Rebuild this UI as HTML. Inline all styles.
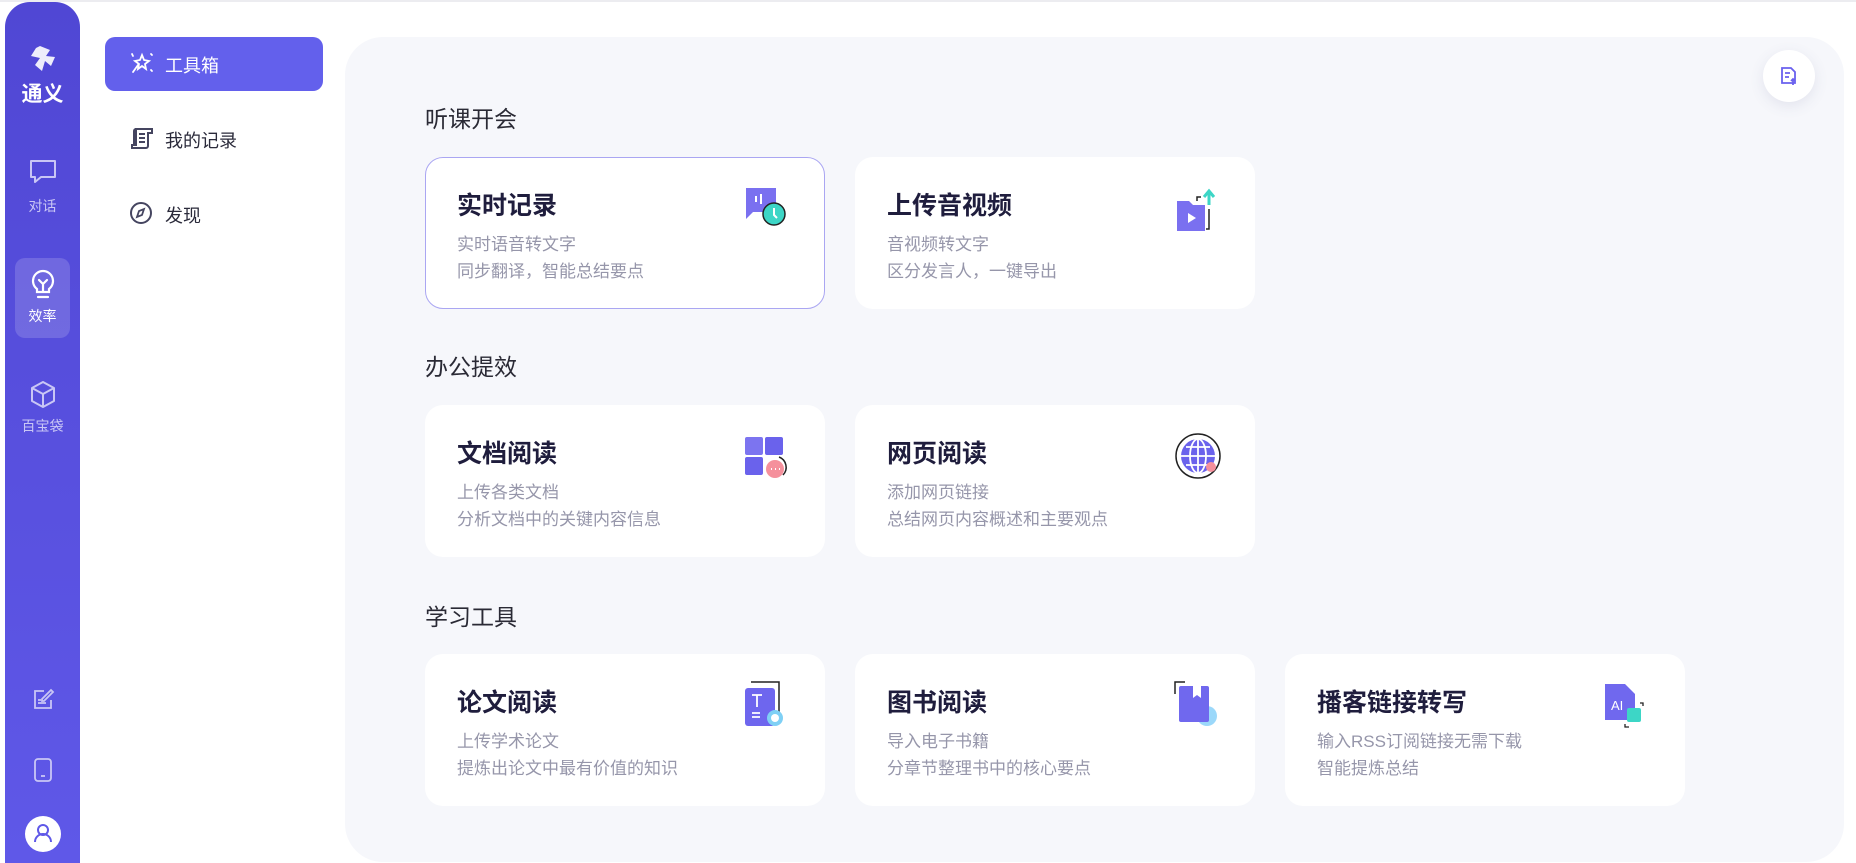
<!DOCTYPE html>
<html><head><meta charset="utf-8">
<style>
*{margin:0;padding:0;box-sizing:border-box}
body{width:1856px;height:863px;background:#fff;font-family:"Liberation Sans","Noto Sans CJK SC",sans-serif;position:relative;overflow:hidden}
.topline{position:absolute;left:0;top:0;width:1856px;height:2px;background:#ececf0}
.side{position:absolute;left:5px;top:2px;width:75px;height:861px;border-radius:25px 25px 0 0;background:linear-gradient(#5047d4,#5f58e8)}
.si{position:absolute;left:0;width:75px;text-align:center;color:#c9c6f5;font-size:14px}
.si svg{display:block;margin:0 auto}
.active{position:absolute;left:10px;top:256px;width:55px;height:80px;border-radius:10px;background:rgba(255,255,255,.16)}
.nav{position:absolute;left:105px;top:37px;width:218px;height:54px;border-radius:10px;background:#6360ec}
.ni{position:absolute;font-size:18px;color:#2a2a3a}
.main{position:absolute;left:345px;top:37px;width:1499px;height:825px;background:#f6f7fb;border-radius:38px}
.h{position:absolute;left:425px;font-size:23px;color:#2a2a35}
.card{position:absolute;width:400px;height:152px;background:#fff;border-radius:18px}
.card .t{position:absolute;left:32px;top:29px;font-size:25px;font-weight:bold;color:#1f1d3d}
.card .s{position:absolute;left:32px;font-size:17px;color:#9696aa}
.card svg{position:absolute;left:318px;top:28px}
.circ{position:absolute;left:1763px;top:50px;width:52px;height:52px;border-radius:50%;background:#fff;box-shadow:0 4px 14px rgba(90,90,140,.12)}
</style></head><body>
<div class="topline"></div>
<div class="side">
 <div class="si" style="top:42px"><svg width="34" height="34" viewBox="0 0 34 34"><path d="M14 2l10 4-4 6 9 1-4 9-6-5-3 10-7-6 5-7-9-2 5-8z" fill="#fff" opacity=".9"/></svg></div>
 <div class="si" style="top:76px;color:#fff;font-size:21px;font-weight:bold">通义</div>
 <div class="si" style="top:156px"><svg width="30" height="28" viewBox="0 0 30 28"><path d="M3 3h24v16H13l-6 5v-5H3z" fill="none" stroke="#c9c6f5" stroke-width="2" stroke-linejoin="round"/></svg></div>
 <div class="si" style="top:194px">对话</div>
 <div class="active"></div>
 <div class="si" style="top:267px"><svg width="26" height="30" viewBox="0 0 26 30"><path d="M13 2a10 10 0 0 0-6 18v3h12v-3a10 10 0 0 0-6-18zM9 11l4 4 4-4M13 15v8M8 28h10" fill="none" stroke="#fff" stroke-width="2.2" stroke-linecap="round"/></svg></div>
 <div class="si" style="top:304px;color:#fff">效率</div>
 <div class="si" style="top:378px"><svg width="28" height="30" viewBox="0 0 28 30"><path d="M14 2l11 6v13l-11 6-11-6V8zM3 8l11 6 11-6M14 14v13" fill="none" stroke="#c9c6f5" stroke-width="2" stroke-linejoin="round"/></svg></div>
 <div class="si" style="top:414px">百宝袋</div>
 <div class="si" style="top:686px"><svg width="24" height="24" viewBox="0 0 24 24"><path d="M13 3H4v17h16v-8M20 2l2 2-9 9h-2v-2zM7 15h8M7 12h3" fill="none" stroke="#c9c6f5" stroke-width="1.8"/></svg></div>
 <div class="si" style="top:755px"><svg width="20" height="26" viewBox="0 0 20 26"><rect x="2" y="2" width="16" height="22" rx="3" fill="none" stroke="#c9c6f5" stroke-width="1.8"/><path d="M8 19h4" stroke="#c9c6f5" stroke-width="1.8"/></svg></div>
 <div style="position:absolute;left:20px;top:814px;width:36px;height:36px;border-radius:50%;background:#fff"><svg width="36" height="36" viewBox="0 0 36 36"><circle cx="18" cy="14" r="5" fill="none" stroke="#5f58e8" stroke-width="2"/><path d="M10 26a8 8 0 0 1 16 0" fill="none" stroke="#5f58e8" stroke-width="2"/></svg></div>
</div>
<div class="nav"></div>
<svg style="position:absolute;left:129px;top:51px" width="26" height="24" viewBox="0 0 26 24"><path d="M13 4l2 5 5 1-4 3 1 5-4-3-4 3 1-5-4-3 5-1zM9 14l-5 7M3 3l1 2M22 3l1 1M22 19l1 1" fill="none" stroke="#fff" stroke-width="1.8" stroke-linecap="round"/></svg>
<div class="ni" style="left:165px;top:52px;color:#fff">工具箱</div>
<svg style="position:absolute;left:129px;top:126px" width="26" height="24" viewBox="0 0 26 24"><path d="M7 3h16v4h-4v13a2 2 0 0 1-2 2H3v-3h4zM7 3a2 2 0 0 0-2 2v14M10 8h6M10 12h6M10 16h6" fill="none" stroke="#454560" stroke-width="2"/></svg>
<div class="ni" style="left:165px;top:127px">我的记录</div>
<svg style="position:absolute;left:129px;top:201px" width="24" height="24" viewBox="0 0 24 24"><circle cx="12" cy="12" r="10" fill="none" stroke="#454560" stroke-width="2"/><path d="M15 8l-2 6-5 2 2-6z" fill="none" stroke="#454560" stroke-width="1.8"/></svg>
<div class="ni" style="left:165px;top:202px">发现</div>

<div class="main"></div>
<div class="circ"><svg width="52" height="52" viewBox="0 0 52 52"><path d="M19 18h9l4 4v11h-13zM22 23h5M22 27h4M30 35v-6M28 31l2-2 2 2" fill="none" stroke="#6a60ee" stroke-width="1.8"/></svg></div>

<div class="h" style="top:100px">听课开会</div>
<div class="h" style="top:348px">办公提效</div>
<div class="h" style="top:598px">学习工具</div>

<div class="card" style="left:425px;top:157px;border:1px solid #aaa6f2"><div class="t" style="left:31px;top:28px">实时记录</div><div class="s" style="top:72px;left:31px">实时语音转文字</div><div class="s" style="top:99px;left:31px">同步翻译，智能总结要点</div>
<svg width="46" height="46" viewBox="0 0 46 46" style="left:318px;top:26px"><path d="M2 4h30v24H9l-7 7z" fill="#7a70f0"/><path d="M12 12v6M17 10v10" stroke="#fff" stroke-width="2"/><circle cx="30" cy="30" r="11" fill="#3dd6c6" stroke="#222" stroke-width="1.5"/><path d="M30 24v7l3 3" stroke="#fff" stroke-width="2" fill="none"/></svg></div>
<div class="card" style="left:855px;top:157px"><div class="t">上传音视频</div><div class="s" style="top:73px">音视频转文字</div><div class="s" style="top:100px">区分发言人，一键导出</div>
<svg width="46" height="46" viewBox="0 0 46 46" style="left:320px;top:30px"><path d="M2 14h12l4 4h12v26H2z" fill="#7a70f0"/><path d="M13 26l8 5-8 5z" fill="#fff"/><path d="M22 14v-4h4M34 22v20h-3" stroke="#222" stroke-width="1.5" fill="none"/><path d="M34 18V6M29 10l5-6 5 6" stroke="#3dd6c6" stroke-width="3" fill="none"/></svg></div>

<div class="card" style="left:425px;top:405px"><div class="t">文档阅读</div><div class="s" style="top:73px">上传各类文档</div><div class="s" style="top:100px">分析文档中的关键内容信息</div>
<svg width="46" height="46" viewBox="0 0 46 46" style="left:318px;top:30px"><rect x="2" y="2" width="18" height="18" rx="2" fill="#7c74f0"/><rect x="22" y="2" width="18" height="18" rx="2" fill="#6a62ec"/><rect x="2" y="22" width="18" height="18" rx="2" fill="#6a62ec"/><circle cx="32" cy="34" r="9" fill="#f5909c"/><path d="M28 34h1M32 34h1M36 34h1" stroke="#fff" stroke-width="2"/><path d="M36 22a11 11 0 0 1 4 18" stroke="#222" stroke-width="1.5" fill="none"/></svg></div>
<div class="card" style="left:855px;top:405px"><div class="t">网页阅读</div><div class="s" style="top:73px">添加网页链接</div><div class="s" style="top:100px">总结网页内容概述和主要观点</div>
<svg width="50" height="50" viewBox="0 0 50 50" style="left:318px;top:26px"><circle cx="25" cy="25" r="22" fill="none" stroke="#222" stroke-width="1.5"/><circle cx="25" cy="25" r="17" fill="#6a62ec"/><path d="M8 25h34M25 8v34M13 16h24M13 34h24" stroke="#fff" stroke-width="1.8"/><ellipse cx="25" cy="25" rx="8" ry="17" fill="none" stroke="#fff" stroke-width="1.8"/><circle cx="38" cy="36" r="5" fill="#f5909c"/></svg></div>

<div class="card" style="left:425px;top:654px"><div class="t">论文阅读</div><div class="s" style="top:73px">上传学术论文</div><div class="s" style="top:100px">提炼出论文中最有价值的知识</div>
<svg width="46" height="50" viewBox="0 0 46 50" style="left:318px;top:26px"><path d="M8 2h28v32" stroke="#222" stroke-width="1.5" fill="none"/><rect x="2" y="8" width="30" height="38" rx="3" fill="#6e66ee"/><path d="M9 15h10M14 15v12M9 33h8M9 37h8" stroke="#fff" stroke-width="1.8"/><circle cx="32" cy="38" r="8" fill="#7fd0f5"/><circle cx="32" cy="38" r="4" fill="#fff"/></svg></div>
<div class="card" style="left:855px;top:654px"><div class="t">图书阅读</div><div class="s" style="top:73px">导入电子书籍</div><div class="s" style="top:100px">分章节整理书中的核心要点</div>
<svg width="50" height="50" viewBox="0 0 50 50" style="left:318px;top:26px"><path d="M2 14V2h10" stroke="#222" stroke-width="1.5" fill="none"/><circle cx="34" cy="36" r="10" fill="#9bd8fa"/><rect x="6" y="6" width="30" height="36" rx="2" fill="#7068ee"/><path d="M20 6v12l4-3 4 3V6" fill="#fff"/></svg></div>
<div class="card" style="left:1285px;top:654px"><div class="t">播客链接转写</div><div class="s" style="top:73px">输入RSS订阅链接无需下载</div><div class="s" style="top:100px">智能提炼总结</div>
<svg width="46" height="50" viewBox="0 0 46 50" style="left:318px;top:26px"><path d="M2 4h20l10 10v26H2z" fill="#7068ee"/><text x="8" y="30" font-size="13" fill="#fff" font-family="Liberation Sans">AI</text><rect x="24" y="28" width="14" height="14" rx="2" fill="#3dd6c6"/><path d="M22 44v3h4M40 26v-3h-3" stroke="#222" stroke-width="1.3" fill="none"/></svg></div>
</body></html>
